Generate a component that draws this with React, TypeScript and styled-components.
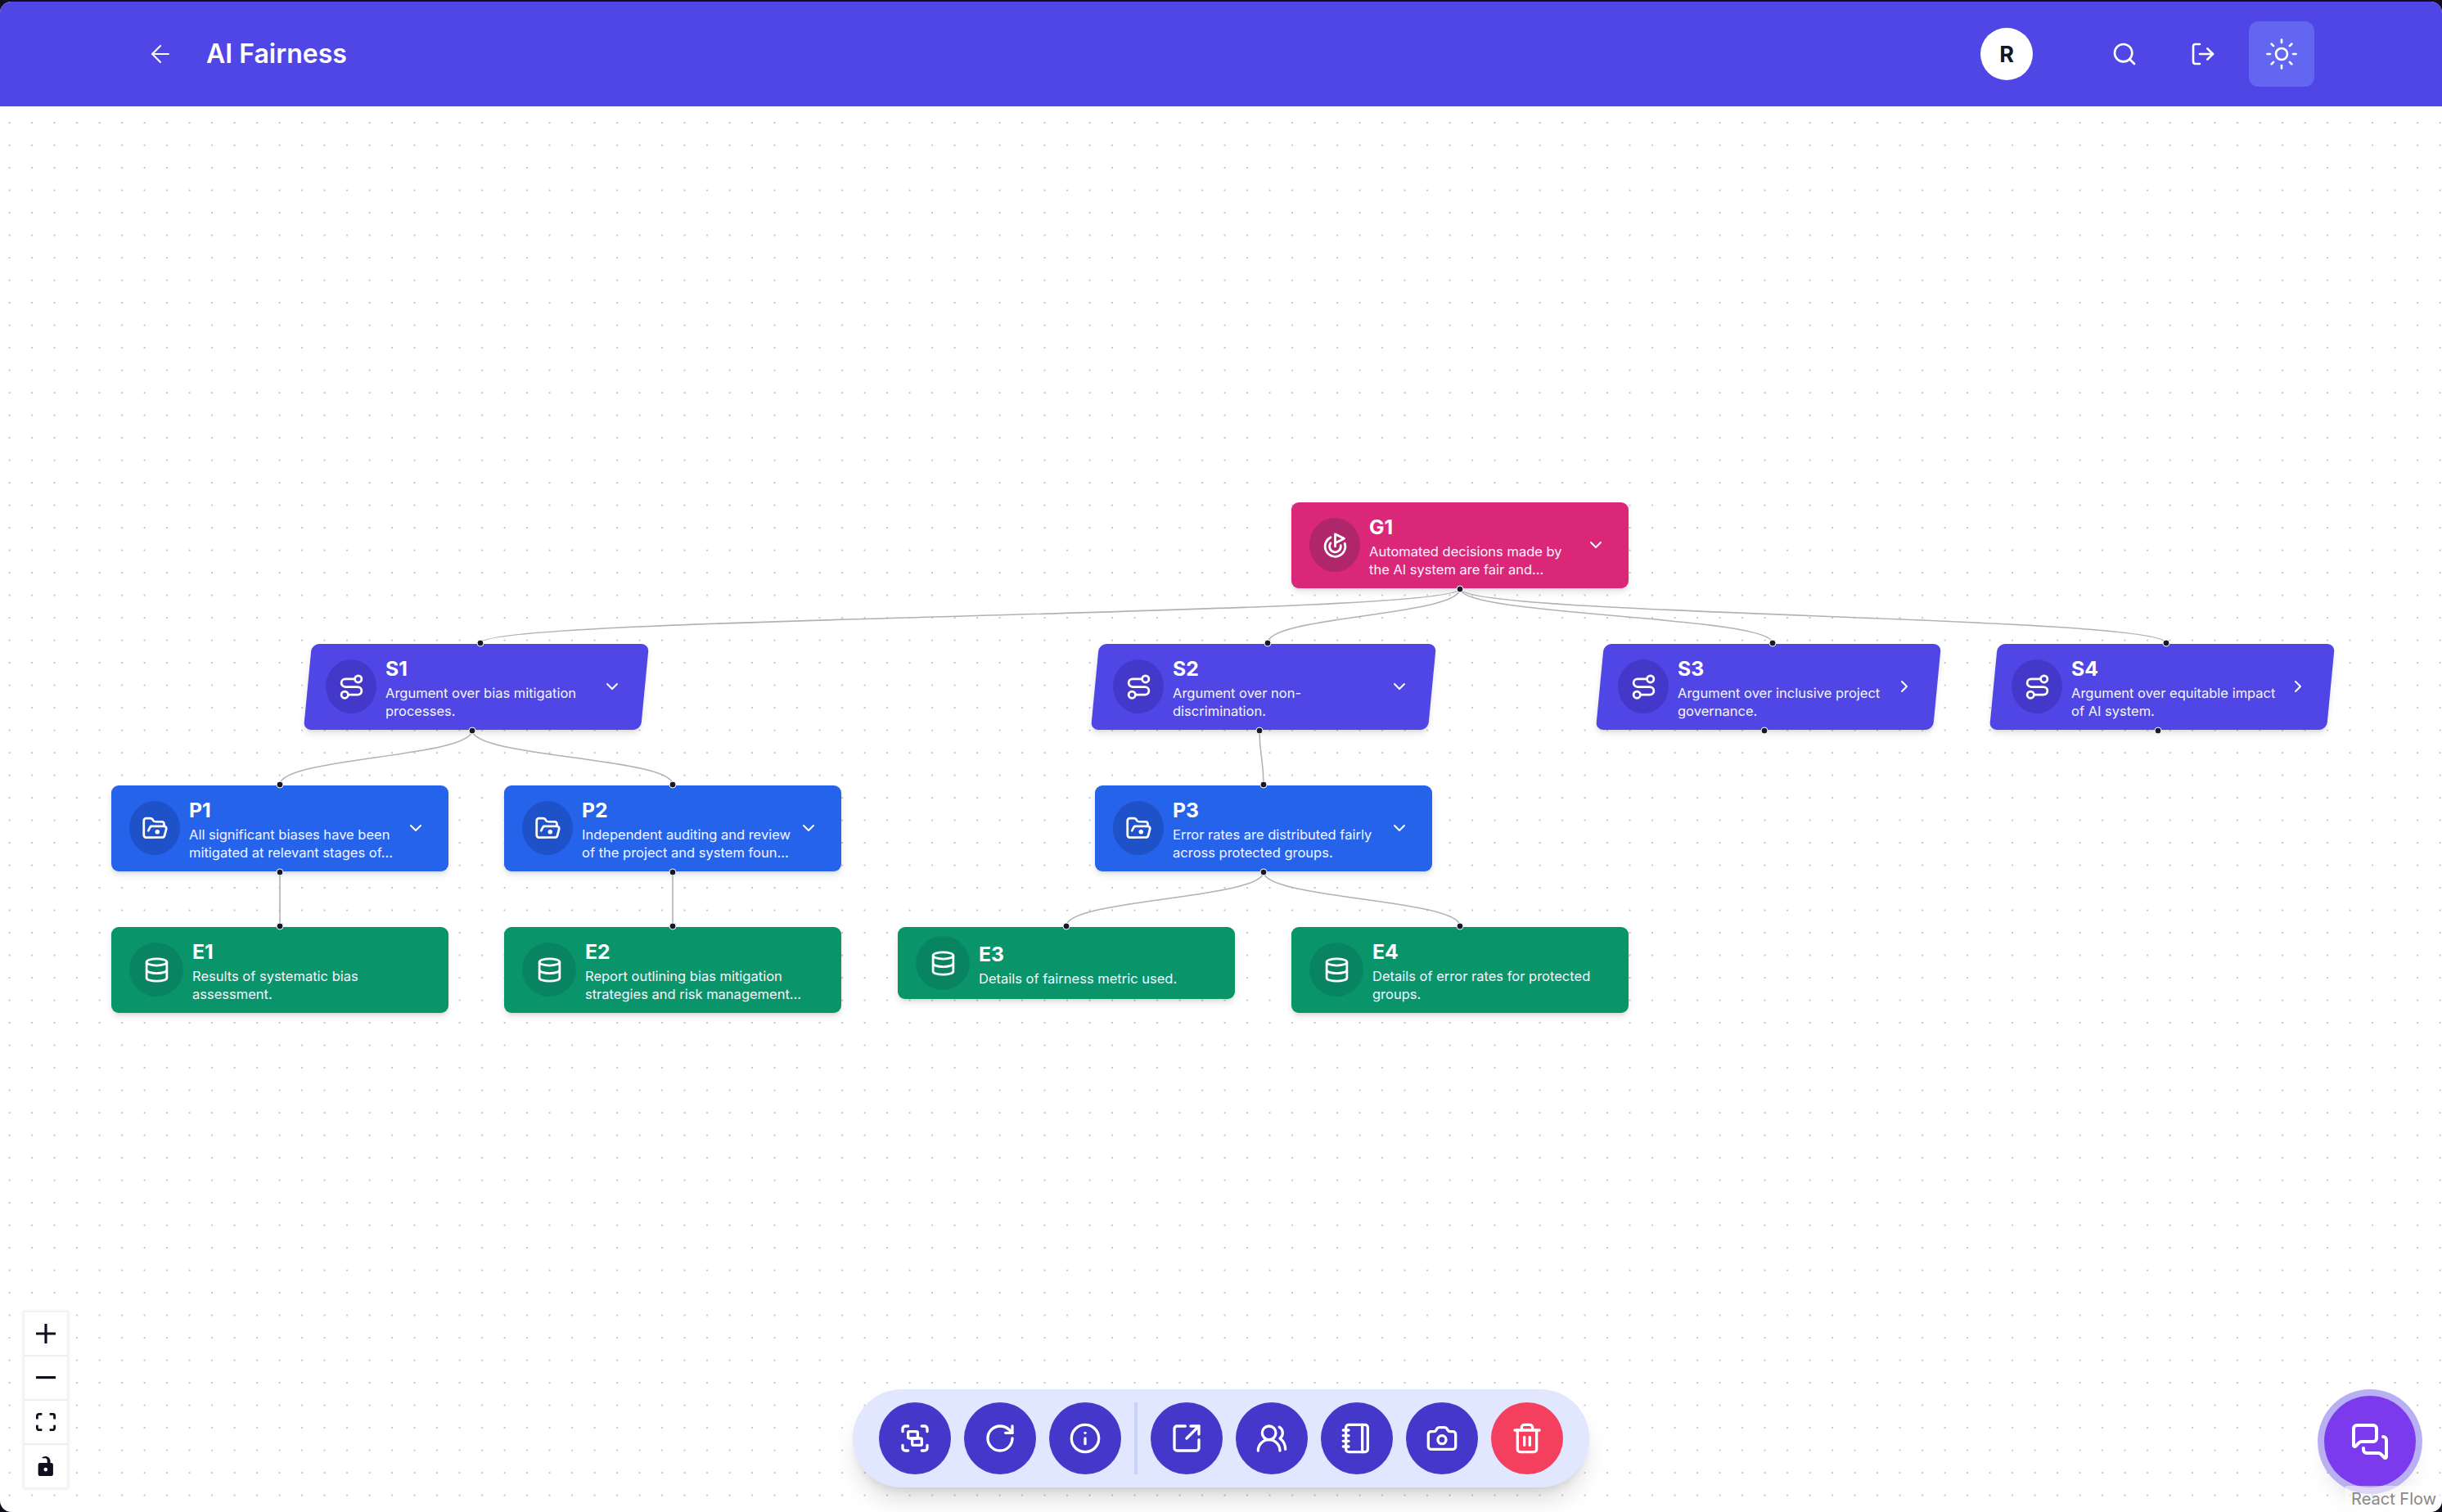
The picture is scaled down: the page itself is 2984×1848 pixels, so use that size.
import styled, { createGlobalStyle } from 'styled-components';
import {
  ArrowLeft,
  ChevronDown,
  ChevronRight,
  Database,
  FolderOpenDot,
  Goal,
  Group,
  Info,
  LogOut,
  MessagesSquare,
  Notebook,
  Camera,
  RotateCw,
  Route,
  Search,
  SquareArrowOutUpRight,
  Sun,
  Trash2,
  UsersRound,
} from 'lucide-react';

type NodeKind = 'goal' | 'strategy' | 'claim' | 'evidence';

interface FlowNode {
  id: string;
  kind: NodeKind;
  x: number;
  y: number;
  text: string;
  open?: 'down' | 'right';
  noTop?: boolean;
  short?: boolean;
}

const NODE_W = 412;
const NODE_H = 104.5;
const SKEW = 5; // handles on the slanted nodes sit off centre by this much

const nodes: FlowNode[] = [
  { id: 'G1', kind: 'goal', x: 1578, y: 484, text: 'Automated decisions made by the AI system are fair and...', open: 'down', noTop: true },
  { id: 'S1', kind: 'strategy', x: 376, y: 657, text: 'Argument over bias mitigation processes.', open: 'down' },
  { id: 'S2', kind: 'strategy', x: 1338, y: 657, text: 'Argument over non-discrimination.', open: 'down' },
  { id: 'S3', kind: 'strategy', x: 1955, y: 657, text: 'Argument over inclusive project governance.', open: 'right' },
  { id: 'S4', kind: 'strategy', x: 2436, y: 657, text: 'Argument over equitable impact of AI system.', open: 'right' },
  { id: 'P1', kind: 'claim', x: 136, y: 830, text: 'All significant biases have been mitigated at relevant stages of...', open: 'down' },
  { id: 'P2', kind: 'claim', x: 616, y: 830, text: 'Independent auditing and review of the project and system foun...', open: 'down' },
  { id: 'P3', kind: 'claim', x: 1338, y: 830, text: 'Error rates are distributed fairly across protected groups.', open: 'down' },
  { id: 'E1', kind: 'evidence', x: 136, y: 1003, text: 'Results of systematic bias assessment.' },
  { id: 'E2', kind: 'evidence', x: 616, y: 1003, text: 'Report outlining bias mitigation strategies and risk management...' },
  { id: 'E3', kind: 'evidence', x: 1097, y: 1003, text: 'Details of fairness metric used.', short: true },
  { id: 'E4', kind: 'evidence', x: 1578, y: 1003, text: 'Details of error rates for protected groups.' },
];

const edges: [string, string][] = [
  ['G1', 'S1'],
  ['G1', 'S2'],
  ['G1', 'S3'],
  ['G1', 'S4'],
  ['S1', 'P1'],
  ['S1', 'P2'],
  ['S2', 'P3'],
  ['P1', 'E1'],
  ['P2', 'E2'],
  ['P3', 'E3'],
  ['P3', 'E4'],
];

const kindColors: Record<NodeKind, { bg: string; circle: string }> = {
  goal: { bg: '#db2777', circle: '#b0266a' },
  strategy: { bg: '#4f46e5', circle: '#4338ca' },
  claim: { bg: '#2563eb', circle: '#1f51c9' },
  evidence: { bg: '#0a9469', circle: '#088560' },
};

const kindIcons = {
  goal: Goal,
  strategy: Route,
  claim: FolderOpenDot,
  evidence: Database,
};

function edgePath(fromId: string, toId: string) {
  const from = nodes.find((n) => n.id === fromId)!;
  const to = nodes.find((n) => n.id === toId)!;
  const sx = from.x + NODE_W / 2 - (from.kind === 'strategy' ? SKEW : 0);
  const sy = from.y + NODE_H + 1;
  const tx = to.x + NODE_W / 2 + (to.kind === 'strategy' ? SKEW : 0);
  const ty = to.y - 1;
  const mid = (sy + ty) / 2;
  return `M${sx},${sy} C${sx},${mid} ${tx},${mid} ${tx},${ty}`;
}

const GlobalStyle = createGlobalStyle`
  html, body {
    margin: 0;
    padding: 0;
    background: #120e20;
  }
  * {
    box-sizing: border-box;
  }
`;

const Frame = styled.div`
  height: 100vh;
  padding-top: 2px;
  font-family: Inter, 'Liberation Sans', sans-serif;
`;

const Surface = styled.div`
  position: relative;
  height: 100%;
  display: flex;
  flex-direction: column;
  background: #fff;
  border-radius: 14px;
  overflow: hidden;
`;

const Header = styled.header`
  flex: none;
  height: 128px;
  display: flex;
  align-items: center;
  padding: 0 156px 0 177px;
  background: #4f46e5;
  color: #fff;
`;

const BackLink = styled.a`
  display: flex;
  align-items: center;
  justify-content: center;
  width: 38px;
  height: 38px;
`;

const Title = styled.h1`
  margin: 0 0 0 37px;
  font-size: 32px;
  line-height: 40px;
  font-weight: 600;
`;

const HeaderActions = styled.div`
  margin-left: auto;
  display: flex;
  align-items: center;
  gap: 16px;
`;

const Avatar = styled.div`
  width: 64px;
  height: 64px;
  margin-right: 56px;
  display: flex;
  align-items: center;
  justify-content: center;
  border-radius: 50%;
  background: #fff;
  color: #111827;
  font-size: 27px;
  font-weight: 700;
`;

const HeaderButton = styled.button<{ $active?: boolean }>`
  width: 80px;
  height: 80px;
  display: flex;
  align-items: center;
  justify-content: center;
  padding: 0;
  border: none;
  border-radius: 12px;
  color: #fff;
  background: ${(p) => (p.$active ? '#6366f1' : 'transparent')};
`;

const Canvas = styled.main`
  position: relative;
  flex: 1;
`;

const FlowLayer = styled.svg`
  position: absolute;
  inset: 0;
  width: 100%;
  height: 100%;
`;

const NodeCard = styled.div<{ $x: number; $y: number; $kind: NodeKind; $short?: boolean }>`
  position: absolute;
  left: ${(p) => p.$x}px;
  top: ${(p) => p.$y}px;
  z-index: 1;
  width: ${NODE_W}px;
  height: ${(p) => (p.$short ? 88 : NODE_H)}px;
  display: flex;
  align-items: center;
  padding: 0 28px 0 22px;
  color: #fff;

  &::before {
    content: '';
    position: absolute;
    inset: 0;
    z-index: -1;
    border-radius: 9px;
    background: ${(p) => kindColors[p.$kind].bg};
    box-shadow: 0 5px 8px -1px rgba(0, 0, 0, 0.12), 0 2px 4px -2px rgba(0, 0, 0, 0.1);
    transform: ${(p) => (p.$kind === 'strategy' ? 'skewX(-5.5deg)' : 'none')};
  }
`;

const IconCircle = styled.div<{ $kind: NodeKind }>`
  flex: none;
  width: ${(p) => (p.$kind === 'evidence' ? 66 : 62)}px;
  height: 66px;
  display: flex;
  align-items: center;
  justify-content: center;
  margin-right: 11px;
  border-radius: 50%;
  background: ${(p) => kindColors[p.$kind].circle};
`;

const NodeText = styled.div<{ $wide: boolean }>`
  width: ${(p) => (p.$wide ? 288 : 258)}px;
`;

const NodeId = styled.div`
  font-size: 24.75px;
  line-height: 37px;
  font-weight: 700;
`;

const NodeDescription = styled.div`
  font-size: 16.5px;
  line-height: 22px;
  color: #f5f5ff;
`;

const Expander = styled.div`
  margin-left: auto;
  display: flex;
`;

const Handle = styled.span<{ $side: 'top' | 'bottom'; $shift: number }>`
  position: absolute;
  left: calc(50% + ${(p) => p.$shift}px);
  ${(p) => (p.$side === 'top' ? 'top: -1px;' : 'bottom: -1px;')}
  width: 9px;
  height: 9px;
  border: 1.4px solid #fff;
  border-radius: 50%;
  background: #1a192b;
  transform: translate(-50%, ${(p) => (p.$side === 'top' ? '-50%' : '50%')});
`;

const Controls = styled.div`
  position: absolute;
  left: 30px;
  bottom: 30px;
  z-index: 5;
  display: flex;
  flex-direction: column;
  box-shadow: 0 0 4px 2px rgba(0, 0, 0, 0.08);
`;

const ControlButton = styled.button`
  width: 52px;
  height: 54px;
  display: flex;
  align-items: center;
  justify-content: center;
  padding: 0;
  border: none;
  border-bottom: 2px solid #eee;
  background: #fefefe;

  &:last-child {
    border-bottom: none;
    height: 52px;
  }

  svg {
    width: 24px;
    max-height: 24px;
    fill: #120e20;
  }
`;

const Toolbar = styled.div`
  position: absolute;
  left: 50%;
  bottom: 30px;
  z-index: 5;
  transform: translateX(-50%);
  display: flex;
  align-items: center;
  gap: 16px;
  padding: 16px 32px;
  border-radius: 60px;
  background: #e0e7ff;
  box-shadow: 0 20px 30px -6px rgba(0, 0, 0, 0.14), 0 8px 12px -6px rgba(0, 0, 0, 0.1);
`;

const ToolButton = styled.button<{ $danger?: boolean }>`
  width: 88px;
  height: 88px;
  display: flex;
  align-items: center;
  justify-content: center;
  padding: 0;
  border: none;
  border-radius: 50%;
  color: #fff;
  background: ${(p) => (p.$danger ? '#f43f5e' : '#4338ca')};
`;

const ToolDivider = styled.div`
  width: 4px;
  height: 88px;
  background: #c7d2fe;
`;

const ChatButton = styled.button`
  position: absolute;
  right: 32px;
  bottom: 30px;
  z-index: 5;
  width: 112px;
  height: 112px;
  display: flex;
  align-items: center;
  justify-content: center;
  padding: 0;
  border: none;
  border-radius: 50%;
  color: #fff;
  background: #7c3aed;
  box-shadow: 0 0 0 8px #b9aff3, 0 20px 30px -6px rgba(0, 0, 0, 0.12);
`;

const Attribution = styled.a`
  position: absolute;
  right: 0;
  bottom: 0;
  z-index: 6;
  padding: 4px 7px;
  font-size: 20px;
  line-height: 24px;
  color: #888;
  background: rgba(255, 255, 255, 0.5);
`;

function DiagramNode({ node }: { node: FlowNode }) {
  const Icon = kindIcons[node.kind];
  const slant = node.kind === 'strategy' ? SKEW : 0;
  return (
    <NodeCard $x={node.x} $y={node.y} $kind={node.kind} $short={node.short}>
      {!node.noTop && <Handle $side="top" $shift={slant} />}
      <IconCircle $kind={node.kind}>
        <Icon size={33} strokeWidth={2} />
      </IconCircle>
      <NodeText $wide={!node.open}>
        <NodeId>{node.id}</NodeId>
        <NodeDescription>{node.text}</NodeDescription>
      </NodeText>
      {node.open && (
        <Expander>
          {node.open === 'down' ? <ChevronDown size={24} /> : <ChevronRight size={24} />}
        </Expander>
      )}
      {node.kind !== 'evidence' && <Handle $side="bottom" $shift={-slant} />}
    </NodeCard>
  );
}

function App() {
  return (
    <Frame>
      <GlobalStyle />
      <Surface>
        <Header>
          <BackLink>
            <ArrowLeft size={34} strokeWidth={1.5} />
          </BackLink>
          <Title>AI Fairness</Title>
          <HeaderActions>
            <Avatar>R</Avatar>
            <HeaderButton>
              <Search size={32} />
            </HeaderButton>
            <HeaderButton>
              <LogOut size={32} />
            </HeaderButton>
            <HeaderButton $active>
              <Sun size={42} strokeWidth={1.5} />
            </HeaderButton>
          </HeaderActions>
        </Header>
        <Canvas>
          <FlowLayer>
            <defs>
              <pattern id="dots" x="-2.15" y="6.25" width="27.5" height="27.5" patternUnits="userSpaceOnUse">
                <circle cx="13.75" cy="13.75" r="0.85" fill="#91919a" />
              </pattern>
            </defs>
            <rect width="100%" height="100%" fill="url(#dots)" />
            {edges.map(([a, b]) => (
              <path key={a + b} d={edgePath(a, b)} fill="none" stroke="#b1b1b7" strokeWidth={1.6} />
            ))}
          </FlowLayer>

          {nodes.map((node) => (
            <DiagramNode key={node.id} node={node} />
          ))}

          <Controls>
            <ControlButton>
              <svg viewBox="0 0 32 32">
                <path d="M32 18.133H18.133V32h-4.266V18.133H0v-4.266h13.867V0h4.266v13.867H32z" />
              </svg>
            </ControlButton>
            <ControlButton>
              <svg viewBox="0 0 32 5">
                <path d="M0 0h32v4.2H0z" />
              </svg>
            </ControlButton>
            <ControlButton>
              <svg viewBox="0 0 32 30">
                <path d="M3.692 4.63c0-.53.4-.938.939-.938h5.215V0H4.708C2.13 0 0 2.054 0 4.63v5.216h3.692V4.631zM27.354 0h-5.2v3.692h5.17c.53 0 .984.4.984.939v5.215H32V4.631A4.624 4.624 0 0027.354 0zm.954 24.83c0 .532-.4.94-.939.94h-5.215v3.768h5.215c2.577 0 4.631-2.13 4.631-4.707v-5.139h-3.692v5.139zm-23.677.94c-.531 0-.939-.4-.939-.94v-5.138H0v5.139c0 2.577 2.13 4.707 4.708 4.707h5.138V25.77H4.631z" />
              </svg>
            </ControlButton>
            <ControlButton>
              <svg viewBox="0 0 25 32">
                <path d="M21.333 10.667H19.81V7.619C19.81 3.429 16.38 0 12.19 0c-4.114 0-6.095 1.828-6.095 1.828l1.37 1.37c.305-.305 1.676-.305 2.59-.305 2.57 0 4.725.305 4.725 4.726v3.048H3.047A3.056 3.056 0 000 13.714v15.238A3.056 3.056 0 003.048 32h18.285a3.056 3.056 0 003.048-3.048V13.714a3.056 3.056 0 00-3.048-3.047zM12.19 24.533a3.056 3.056 0 01-3.047-3.047 3.056 3.056 0 013.047-3.048 3.056 3.056 0 013.048 3.048 3.056 3.056 0 01-3.048 3.047z" />
              </svg>
            </ControlButton>
          </Controls>

          <Toolbar>
            <ToolButton>
              <Group size={40} />
            </ToolButton>
            <ToolButton>
              <RotateCw size={40} />
            </ToolButton>
            <ToolButton>
              <Info size={40} />
            </ToolButton>
            <ToolDivider />
            <ToolButton>
              <SquareArrowOutUpRight size={40} />
            </ToolButton>
            <ToolButton>
              <UsersRound size={40} />
            </ToolButton>
            <ToolButton>
              <Notebook size={40} />
            </ToolButton>
            <ToolButton>
              <Camera size={40} />
            </ToolButton>
            <ToolButton $danger>
              <Trash2 size={40} />
            </ToolButton>
          </Toolbar>

          <ChatButton>
            <MessagesSquare size={48} />
          </ChatButton>
          <Attribution>React Flow</Attribution>
        </Canvas>
      </Surface>
    </Frame>
  );
}

export default App;
